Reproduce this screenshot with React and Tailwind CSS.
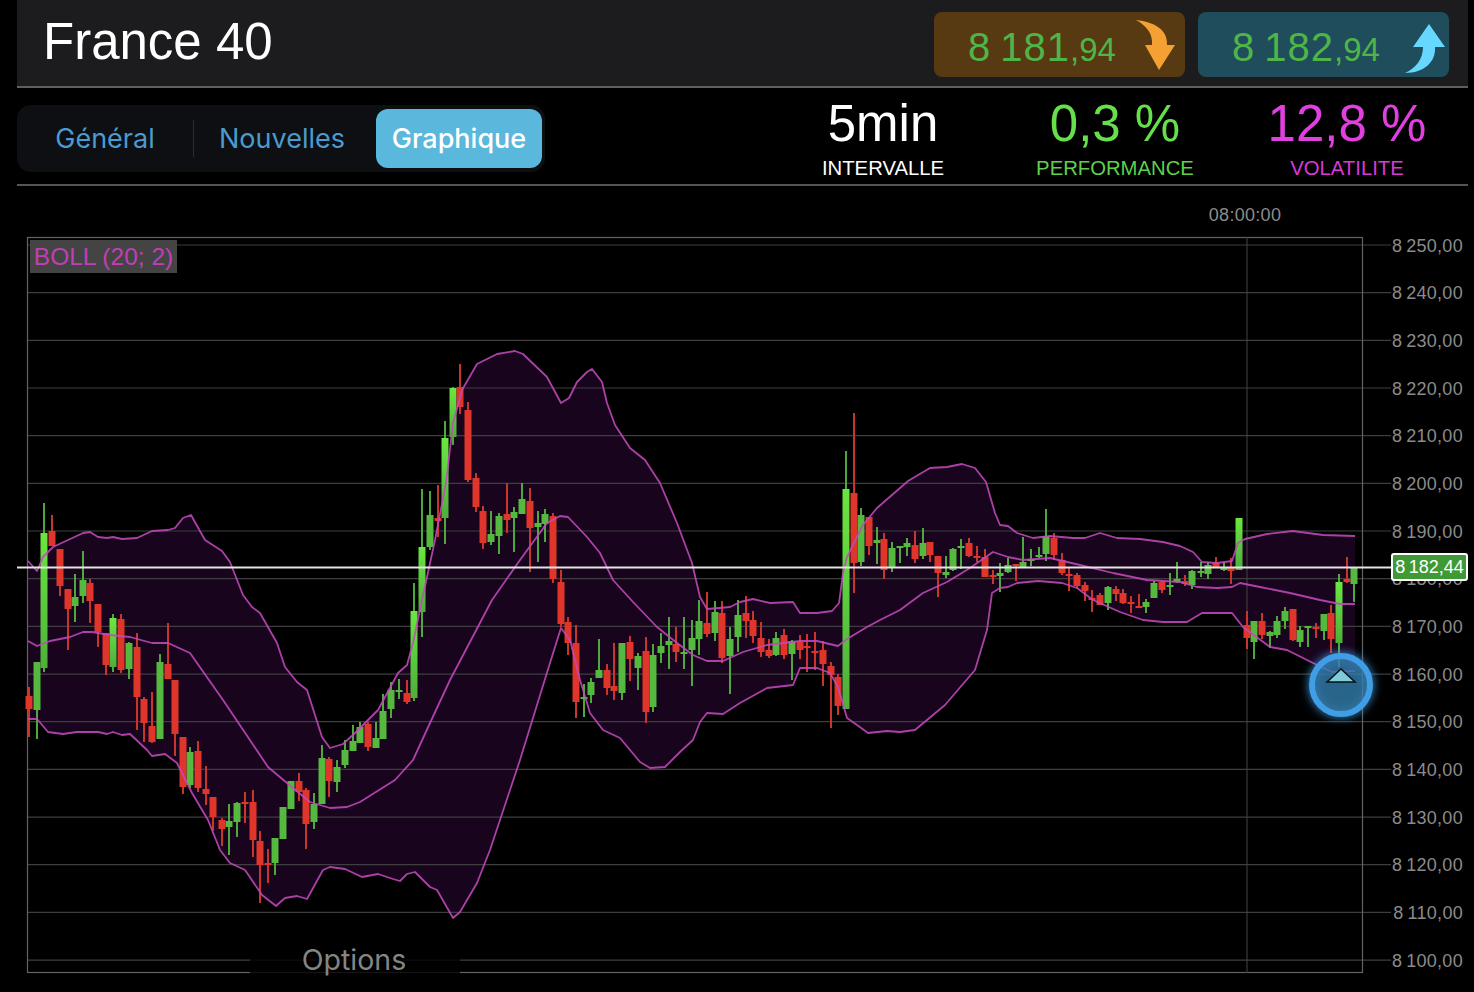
import React from 'react';

// x, wick top, wick bottom, body top, body bottom (page pixels)
const G = [
  [37,662,739,662,710],[44,503,672,533,668],[75,574,622,597,606],[83,551,603,580,596],[113,614,672,618,667],[129,642,679,643,669],
  [160,654,739,662,739],[190,747,788,752,785],[229,804,855,821,827],[237,802,837,803,822],[275,838,875,838,863],[283,807,839,807,839],
  [291,781,809,781,809],[314,793,829,804,822],[322,745,804,758,804],[337,760,792,767,782],[345,740,768,750,765],[353,725,751,741,751],
  [360,722,743,727,743],[376,722,748,738,748],[383,694,739,711,739],[391,682,718,690,709],[399,679,699,690,692],[414,583,701,611,698],
  [422,489,637,547,612],[430,491,550,515,547],[445,421,544,438,518],[453,387,445,388,437],[491,511,545,534,542],[499,513,554,516,536],
  [514,507,552,512,518],[522,483,514,499,514],[538,511,562,523,527],[545,509,542,514,524],[584,684,717,697,699],[591,678,703,682,695],
  [599,639,678,670,678],[622,643,700,643,693],[638,653,690,656,668],[653,644,712,655,707],[661,633,663,646,653],[669,617,669,641,645],
  [684,617,669,652,654],[692,620,686,638,650],[699,600,655,621,639],[715,601,641,612,633],[730,627,694,639,656],[738,600,652,615,637],
  [776,632,656,638,655],[792,640,680,641,654],[846,451,709,489,709],[861,508,566,515,562],[877,527,564,540,543],[892,542,572,548,568],
  [900,546,563,546,548],[907,538,556,543,547],[923,528,559,543,556],[946,556,578,572,575],[953,548,571,549,570],[961,539,569,546,548],
  [1000,563,592,573,576],[1008,558,573,565,572],[1023,537,567,562,567],[1031,549,566,559,561],[1039,547,558,555,557],[1046,509,561,536,554],
  [1108,586,610,587,603],[1146,599,613,602,607],[1154,581,598,583,598],[1170,573,595,585,587],[1177,562,583,579,582],[1192,570,589,571,585],
  [1201,562,577,571,573],[1208,562,579,565,574],[1224,562,571,568,569],[1239,518,570,518,570],[1254,621,659,621,642],[1270,631,648,632,636],
  [1277,616,638,621,635],[1285,607,629,611,621],[1300,626,647,630,642],[1308,626,647,626,628],[1324,614,640,614,631],[1339,574,667,582,643],
  [1354,567,602,568,584],
];
const R = [
  [29,687,737,696,709],[52,515,546,531,546],[60,549,596,549,586],[68,589,650,589,609],[90,579,623,583,601],[98,604,647,604,632],
  [106,633,675,633,665],[121,614,673,619,670],[137,633,730,647,697],[144,697,742,699,723],[152,692,743,726,742],[168,623,679,664,679],
  [175,680,756,680,734],[183,737,794,737,787],[198,741,792,751,788],[206,766,805,789,794],[213,797,831,797,817],[222,818,846,820,829],
  [245,792,823,802,804],[253,790,857,802,840],[260,831,903,841,865],[268,849,883,863,865],[299,773,801,781,792],[306,788,849,790,824],
  [329,757,797,759,781],[368,722,751,724,747],[407,680,704,693,702],[438,485,537,518,521],[460,364,414,387,407],[468,402,482,410,480],
  [476,473,512,478,507],[483,506,549,511,543],[507,483,533,514,520],[530,488,572,501,528],[553,513,583,516,579],[561,570,627,582,624],
  [568,617,655,622,643],[576,625,718,643,702],[607,664,695,670,688],[614,643,700,686,691],[630,636,681,642,659],[646,637,723,651,712],
  [676,627,662,644,652],[707,592,637,623,634],[722,601,663,613,658],[746,596,638,613,621],[753,611,643,620,636],[761,622,657,638,652],
  [769,639,658,650,656],[784,629,659,635,655],[800,635,659,642,650],[807,634,672,646,648],[815,632,670,651,653],[823,641,686,650,664],
  [831,662,728,666,675],[838,674,715,677,706],[854,413,593,493,563],[869,517,555,517,546],[884,533,579,539,570],[915,531,563,545,559],
  [930,542,562,542,555],[938,556,597,556,573],[969,538,557,543,556],[977,546,562,556,558],[985,549,577,557,577],[993,570,584,575,577],
  [1016,565,581,564,566],[1054,533,560,538,555],[1062,553,575,560,573],[1069,568,591,574,576],[1077,573,588,575,586],[1085,582,601,585,591],
  [1092,590,612,598,600],[1100,593,605,595,605],[1116,586,601,589,594],[1123,589,604,593,603],[1131,596,613,602,604],[1139,594,607,606,608],
  [1162,581,593,582,590],[1185,575,586,581,584],[1216,557,568,563,567],[1231,558,584,568,571],[1247,611,649,625,638],[1262,613,639,621,635],
  [1293,609,641,609,640],[1316,623,638,627,629],[1331,605,653,613,639],[1347,557,583,579,582],
];

const upper = [[28,561],[37,571],[43,557],[53,547],[68,540],[83,533],[90,532],[98,537],[107,538],[113,537],[122,539],[137,538],[152,531],[168,530],[175,528],[183,518],[191,515],[205,540],[222,551],[230,562],[243,595],[252,607],[260,613],[277,643],[285,667],[297,682],[307,690],[322,737],[330,748],[343,744],[355,733],[378,710],[398,673],[407,665],[413,643],[422,600],[435,540],[446,483],[453,423],[462,390],[477,364],[497,354],[515,351],[523,354],[547,377],[561,403],[569,398],[577,382],[587,372],[592,369],[602,382],[607,403],[615,425],[630,448],[645,460],[660,483],[677,523],[692,563],[700,597],[707,609],[730,607],[740,602],[753,599],[770,603],[793,602],[800,613],[817,613],[832,611],[839,603],[843,573],[847,557],[863,525],[877,508],[900,488],[908,481],[930,468],[947,467],[962,464],[975,468],[986,482],[995,513],[1000,525],[1008,526],[1017,533],[1033,538],[1050,536],[1073,538],[1085,538],[1100,533],[1117,538],[1140,539],[1163,542],[1180,546],[1193,552],[1202,562],[1217,563],[1232,561],[1238,543],[1245,539],[1267,534],[1293,531],[1323,535],[1355,536]];
const middle = [[28,641],[37,646],[50,641],[70,637],[83,632],[92,632],[110,635],[130,637],[152,643],[168,643],[190,653],[223,700],[268,767],[287,783],[310,802],[330,808],[347,807],[360,802],[395,780],[413,760],[430,723],[450,680],[492,600],[520,560],[547,523],[560,516],[568,517],[587,537],[600,553],[613,580],[633,602],[657,627],[677,643],[693,655],[707,661],[723,661],[743,652],[767,645],[800,641],[817,641],[838,646],[847,639],[867,627],[880,620],[900,610],[923,593],[947,582],[970,568],[993,552],[1008,557],[1023,560],[1050,558],[1080,565],[1113,573],[1147,580],[1180,582],[1197,587],[1217,588],[1232,587],[1240,583],[1260,587],[1290,593],[1320,600],[1340,604],[1355,604]];
const lower = [[28,719],[37,719],[48,732],[63,734],[77,732],[98,732],[107,734],[113,732],[122,735],[130,734],[147,750],[152,756],[165,754],[177,763],[192,793],[208,820],[220,850],[230,863],[245,870],[262,895],[276,906],[285,898],[297,896],[307,899],[323,870],[330,867],[345,869],[362,877],[378,874],[393,879],[400,881],[407,874],[415,872],[430,887],[437,890],[453,918],[460,912],[477,883],[490,850],[520,760],[550,663],[561,628],[570,640],[580,680],[590,713],[603,730],[620,738],[640,762],[650,768],[665,767],[680,752],[693,740],[700,722],[707,713],[723,714],[740,703],[767,688],[793,685],[800,668],[817,668],[830,673],[838,687],[847,718],[857,725],[868,733],[887,731],[900,732],[915,730],[945,705],[975,670],[987,630],[992,593],[1000,588],[1008,587],[1017,583],[1038,581],[1062,583],[1077,588],[1093,600],[1120,612],[1143,620],[1163,622],[1187,622],[1202,613],[1232,613],[1243,627],[1270,647],[1287,650],[1313,663],[1332,672],[1355,671]];

const toPoints = (pts) => pts.map((p) => p.join(',')).join(' ');
const levels = Array.from({ length: 16 }, (_, i) => 8250 - i * 10);
const levelY = (i) => 245 + i * 47.67;

const Candle = ({ c, up }) => {
  const [x, top, bottom, bodyTop, bodyBottom] = c;
  const tall = up && bodyBottom - bodyTop >= 48 && bodyTop <= 620;
  const body = up ? (tall ? 'url(#tallGreen)' : '#55b83f') : '#e0352b';
  return (
    <g>
      <rect x={x - 1} y={top} width="2" height={bottom - top} fill={up ? '#4fa83c' : '#c9352a'} />
      <rect x={x - 3.5} y={bodyTop} width="7" height={Math.max(bodyBottom - bodyTop, 2)} fill={body} />
    </g>
  );
};

const Chart = () => (
  <svg viewBox="17 186 1451 806" className="absolute inset-0 h-full w-full" style={{ fontFamily: '"Liberation Sans", Arial, sans-serif' }}>
    <defs>
      <linearGradient id="tallGreen" x1="0" y1="0" x2="0" y2="1">
        <stop offset="0" stopColor="#6ae640" />
        <stop offset="0.5" stopColor="#5ccb3f" />
        <stop offset="1" stopColor="#4fae3a" />
      </linearGradient>
    </defs>

    <polygon points={toPoints([...upper, ...[...lower].reverse()])} fill="#18041d" />

    {levels.map((l, i) => (
      <line key={l} x1="27" x2="1391" y1={levelY(i)} y2={levelY(i)} stroke="#3f3d40" strokeWidth="1.2" />
    ))}
    <rect x="27.5" y="237.5" width="1335" height="735" fill="none" stroke="#636363" strokeWidth="1.2" />
    <line x1="1247" x2="1247" y1="237" y2="973" stroke="#444444" strokeWidth="1" />

    {G.map((c) => <Candle key={`g${c[0]}`} c={c} up />)}
    {R.map((c) => <Candle key={`r${c[0]}`} c={c} />)}

    {[upper, middle, lower].map((band, i) => (
      <polyline key={i} points={toPoints(band)} fill="none" stroke="#c24abb" strokeOpacity="0.88" strokeWidth="1.8" strokeLinejoin="round" />
    ))}

    <line x1="17" x2="1392" y1="567.5" y2="567.5" stroke="#e4e4e4" strokeWidth="2" />

    <text x="1245" y="221" fontSize="18" letterSpacing="0.3" fill="#8b8b8b" textAnchor="middle">08:00:00</text>
    {levels.map((l, i) => (
      <text key={l} x="1463" y={levelY(i) + 6.5} fontSize="18" letterSpacing="0.3" fill="#8b8b8b" textAnchor="end">
        {`${String(l)[0]}\u2009${String(l).slice(1)},00`}
      </text>
    ))}

    <circle cx="1341" cy="685" r="29" fill="#2f6f96" fillOpacity="0.55" stroke="#3f9ee6" strokeWidth="6" style={{ filter: 'drop-shadow(0 0 5px #3f9ee6)' }} />
    <polygon points="1341,669 1355,682 1327,682" fill="#7fcbd8" stroke="#06121a" strokeWidth="1.5" />
  </svg>
);

const PriceButton = ({ value, cents, bg, arrow, view, right }) => (
  <div className={`flex h-[65px] w-[251px] items-center justify-between rounded-lg pl-[34px] ${bg} ${right}`}>
    <div className="flex items-baseline pt-[4px] text-[#4fb548]">
      <span className="text-[40px] leading-none tracking-[1px]">{value}</span>
      <span className="text-[33px] leading-none">,{cents}</span>
    </div>
    <svg viewBox={view} className="h-[58px] w-[42px]">
      <path d={arrow} />
    </svg>
  </div>
);

const Stat = ({ value, label, valueColor, labelColor }) => (
  <div className="flex w-[232px] flex-col items-center">
    <span className={`text-[51px] leading-[58px] ${valueColor}`}>{value}</span>
    <span className={`mt-[3px] text-[20.3px] leading-[24px] ${labelColor}`}>{label}</span>
  </div>
);

export default function App() {
  return (
    <div className="flex h-[992px] w-[1474px] flex-col overflow-hidden bg-black pl-[17px] pr-[6px] font-['Liberation_Sans',Arial,sans-serif]">
      {/* Header */}
      <div className="flex h-[88px] shrink-0 items-start border-b-2 border-[#5f5f5f] bg-[#1c1c1e] pl-[26px] pr-[19px]">
        <span className="mt-[12px] text-[51px] leading-[60px] text-white">France 40</span>
        <div className="ml-auto mt-[12px] flex gap-[13px]">
          <PriceButton
            value={'8\u2009181'}
            cents="94"
            bg="bg-[#573a12] fill-[#f5a033]"
            right="pr-[8px]"
            view="1135 14 42 58"
            arrow="M1136 18C1155 20 1168 28 1167 43L1175 43L1159 68L1145 43L1152 43C1153 32 1147 24 1136 18Z"
          />
          <PriceButton
            value={'8\u2009182'}
            cents="94"
            bg="bg-[#1f4d5c] fill-[#66d8ff]"
            right="pr-[3px]"
            view="1404 14 42 58"
            arrow="M1429 22L1445 45L1435 45C1436 60 1424 71 1405 71C1416 66 1423 57 1423 45L1413 45Z"
          />
        </div>
      </div>

      {/* Tabs and stats */}
      <div className="flex h-[98px] shrink-0 items-start border-b-2 border-[#555555] pr-[5px]">
        <div className="mt-[17px] flex h-[67px] w-[528px] items-center rounded-[14px] bg-[#0e0f12] pr-[3px] font-['Inter',sans-serif] text-[27px] text-[#4a9bd0]">
          <span className="w-[176px] pt-[2px] text-center">Général</span>
          <span className="h-[37px] w-px bg-[#2b2c30]" />
          <span className="w-[182px] pr-[6px] pt-[2px] text-center">Nouvelles</span>
          <span className="flex h-[59px] w-[166px] items-center justify-center rounded-[12px] bg-[#5ab8dc] pt-[2px] font-medium text-white">Graphique</span>
        </div>
        <div className="ml-auto mt-[7px] flex">
          <Stat value="5min" label="INTERVALLE" valueColor="text-white" labelColor="text-white" />
          <Stat value="0,3 %" label="PERFORMANCE" valueColor="text-[#66e04a]" labelColor="text-[#5fd04a]" />
          <Stat value="12,8 %" label="VOLATILITE" valueColor="text-[#e040e0]" labelColor="text-[#d83ad8]" />
        </div>
      </div>

      {/* Chart */}
      <div className="relative min-h-0 flex-1">
        <Chart />
        <div className="absolute left-[13px] top-[54px] flex h-[33px] w-[147px] items-center justify-center bg-[#444444] pt-[2px] text-[24.5px] text-[#c03fb5]">BOLL (20; 2)</div>
        <div className="absolute left-[1374px] top-[367px] flex h-[28px] w-[77px] items-center justify-center rounded-[3px] border-2 border-white bg-[#3f9a35] text-[18px] text-white">{'8\u2009182,44'}</div>
        <div className="absolute left-[233px] top-[754px] flex h-[40px] w-[210px] items-center justify-center rounded-t-md bg-black/80 pr-[2px] font-['Inter',sans-serif] text-[28.5px] text-[#858585]">Options</div>
      </div>
    </div>
  );
}
